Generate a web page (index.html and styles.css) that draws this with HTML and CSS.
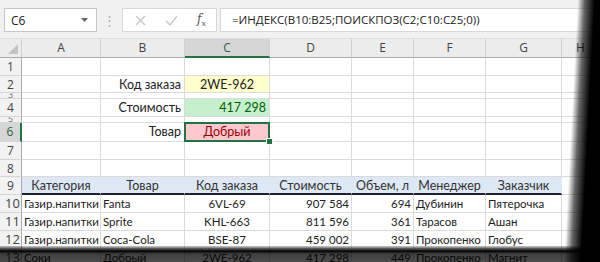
FILE: index.html
```html
<html>
	<head>
		<title>Excel - ИНДЕКС и ПОИСКПОЗ</title>
		<link rel="stylesheet" href="styles.css">
	</head>
	<body>
		<div class="window">
			<div class="bar">
				<div class="namebox">
					<span>C6</span>
					<svg width="7" height="4" viewBox="0 0 7 4"><path d="M0 0h7L3.5 4z" fill="#666"/></svg>
				</div>
				<div class="grip">⋮</div>
				<div class="fxbox">
					<svg width="11" height="11" viewBox="0 0 11 11"><path d="M1 1l9 9M10 1l-9 9" stroke="#c8c8c8" stroke-width="1.4"/></svg>
					<svg width="13" height="11" viewBox="0 0 13 11"><path d="M1 6l4 4l7-9" stroke="#c8c8c8" stroke-width="1.4" fill="none"/></svg>
					<span class="fx">f<sub>x</sub></span>
				</div>
				<div class="formula">=ИНДЕКС(B10:B25;ПОИСКПОЗ(C2;C10:C25;0))</div>
			</div>

			<div class="sheet">
				<div class="row head">
					<div class="corner"><i></i></div>
					<div>A</div><div>B</div><div class="on">C</div><div>D</div><div>E</div><div>F</div><div>G</div><div>H</div>
				</div>
				<div class="row">
					<div class="rh">1</div>
					<div class="c"></div><div class="c"></div><div class="c"></div><div class="c"></div><div class="c"></div><div class="c"></div><div class="c"></div><div class="c"></div>
				</div>
				<div class="row h17">
					<div class="rh">2</div>
					<div class="c"></div><div class="c lbl">Код заказа</div><div class="c ctr yellow">2WE-962</div><div class="c"></div><div class="c"></div><div class="c"></div><div class="c"></div><div class="c"></div>
				</div>
				<div class="row thin">
					<div class="rh"><span>3</span></div>
					<div class="c"></div><div class="c"></div><div class="c"></div><div class="c"></div><div class="c"></div><div class="c"></div><div class="c"></div><div class="c"></div>
				</div>
				<div class="row">
					<div class="rh">4</div>
					<div class="c"></div><div class="c lbl">Стоимость</div><div class="c num green">417 298</div><div class="c"></div><div class="c"></div><div class="c"></div><div class="c"></div><div class="c"></div>
				</div>
				<div class="row thin">
					<div class="rh"><span>5</span></div>
					<div class="c"></div><div class="c"></div><div class="c"></div><div class="c"></div><div class="c"></div><div class="c"></div><div class="c"></div><div class="c"></div>
				</div>
				<div class="row h19">
					<div class="rh on">6</div>
					<div class="c"></div><div class="c lbl">Товар</div><div class="c ctr red sel">Добрый</div><div class="c"></div><div class="c"></div><div class="c"></div><div class="c"></div><div class="c"></div>
				</div>
				<div class="row">
					<div class="rh">7</div>
					<div class="c"></div><div class="c"></div><div class="c"></div><div class="c"></div><div class="c"></div><div class="c"></div><div class="c"></div><div class="c"></div>
				</div>
				<div class="row h17">
					<div class="rh">8</div>
					<div class="c"></div><div class="c"></div><div class="c"></div><div class="c"></div><div class="c"></div><div class="c"></div><div class="c"></div><div class="c"></div>
				</div>
				<div class="row">
					<div class="rh">9</div>
					<div class="c th">Категория</div><div class="c th">Товар</div><div class="c th">Код заказа</div><div class="c th">Стоимость</div><div class="c th">Объем, л</div><div class="c th">Менеджер</div><div class="c th">Заказчик</div><div class="c"></div>
				</div>
				<div class="row data">
					<div class="rh">10</div>
					<div class="c">Газир.напитки</div><div class="c">Fanta</div><div class="c ctr">6VL-69</div><div class="c num">907 584</div><div class="c num">694</div><div class="c">Дубинин</div><div class="c">Пятерочка</div><div class="c"></div>
				</div>
				<div class="row data">
					<div class="rh">11</div>
					<div class="c">Газир.напитки</div><div class="c">Sprite</div><div class="c ctr">KHL-663</div><div class="c num">811 596</div><div class="c num">361</div><div class="c">Тарасов</div><div class="c">Ашан</div><div class="c"></div>
				</div>
				<div class="row data">
					<div class="rh">12</div>
					<div class="c">Газир.напитки</div><div class="c">Coca-Cola</div><div class="c ctr">BSE-87</div><div class="c num">459 002</div><div class="c num">391</div><div class="c">Прокопенко</div><div class="c">Глобус</div><div class="c"></div>
				</div>
				<div class="row data">
					<div class="rh">13</div>
					<div class="c">Соки</div><div class="c">Добрый</div><div class="c ctr">2WE-962</div><div class="c num">417 298</div><div class="c num">449</div><div class="c">Прокопенко</div><div class="c">Магнит</div><div class="c"></div>
				</div>
			</div>

			<div class="shade-right"></div>
			<div class="shade-bottom"></div>
		</div>
	</body>
</html>
```

FILE: styles.css
```css
body {
	margin: 0;
	background: #000;
}
.window {
	position: relative;
	width: 600px;
	height: 262px;
	overflow: hidden;
	background: #fff;
}

/* formula bar */
.bar {
	height: 39px;
	box-sizing: border-box;
	padding: 8px 0 0 4px;
	display: flex;
	align-items: flex-start;
	background: #f1f1f1;
	border-bottom: 1px solid #dedede;
	font-family: "Open Sans", sans-serif;
	font-size: 12px;
	color: #222;
}
.namebox {
	width: 93px;
	height: 24px;
	box-sizing: border-box;
	border: 1px solid #c6c6c6;
	background: #fff;
	display: flex;
	align-items: center;
	justify-content: space-between;
	padding: 0 8px 0 6px;
}
.grip {
	width: 25px;
	height: 24px;
	line-height: 24px;
	text-align: center;
	color: #b0b0b0;
	font-size: 13px;
}
.fxbox {
	width: 95px;
	height: 24px;
	box-sizing: border-box;
	border: 1px solid #d8d8d8;
	background: #fff;
	display: flex;
	align-items: center;
	gap: 19px;
	padding-left: 12px;
}
.fx {
	font-family: "DejaVu Serif", serif;
	font-style: italic;
	font-size: 12px;
	color: #555;
}
.fx sub {
	font-size: 8px;
}
.formula {
	flex: 1;
	height: 24px;
	line-height: 22px;
	box-sizing: border-box;
	margin-left: 3px;
	border: 1px solid #d8d8d8;
	background: #fff;
	padding-left: 11px;
	white-space: nowrap;
	font-size: 11.5px;
}

/* sheet grid */
.sheet {
	font-family: Lato, sans-serif;
	font-size: 12.5px;
	color: #222;
}
.row {
	display: grid;
	grid-template-columns: 22px 79px 84px 85px 82px 62px 72px 76px 38px;
	height: 18px;
}
.row.h17 { height: 17px; }
.row.h19 { height: 19px; }
.row.thin { height: 6px; }
.row > div {
	box-sizing: border-box;
	overflow: hidden;
	white-space: nowrap;
}
.row.head {
	height: 19px;
	font-family: "Open Sans", sans-serif;
	font-size: 12px;
	color: #444;
}
.head > div {
	background: #ececec;
	border-right: 1px solid #cfcfcf;
	border-bottom: 1px solid #ababab;
	text-align: center;
	line-height: 18px;
}
.head > div.on {
	background: #d6d6d6;
	border-bottom: 2px solid #217346;
	color: #2f5d44;
}
.head .corner {
	display: flex;
	align-items: flex-end;
	justify-content: flex-end;
	padding: 0 3px 3px 0;
}
.corner i {
	width: 0;
	height: 0;
	border-left: 10px solid transparent;
	border-bottom: 10px solid #c4c4c4;
}
.rh {
	background: #f2f2f2;
	border-right: 1px solid #ababab;
	border-bottom: 1px solid #d4d4d4;
	font-family: "Open Sans", sans-serif;
	font-size: 12px;
	color: #444;
	text-align: center;
	line-height: 17px;
}
.rh.on {
	background: #d6d6d6;
	border-right: 2px solid #217346;
	color: #2f5d44;
}
.thin .rh {
	display: flex;
	justify-content: center;
	align-items: flex-start;
	line-height: 5px;
}
.thin .rh span {
	display: block;
	height: 5px;
	overflow: hidden;
	font-size: 9px;
	line-height: 4px;
	color: #777;
}
.c {
	border-right: 1px solid #dadada;
	border-bottom: 1px solid #dadada;
	padding: 0 3px;
	line-height: 17px;
}
.lbl,
.num {
	text-align: right;
}
.ctr {
	text-align: center;
}
.yellow {
	background: #ffffcc;
}
.green {
	background: #c6efce;
	color: #006100;
}
.red {
	background: #ffc7ce;
	color: #9c0006;
}
.row > .sel {
	position: relative;
	overflow: visible;
}
.sel::after {
	content: "";
	position: absolute;
	left: -1px;
	top: -1px;
	right: -1px;
	bottom: -1px;
	border: 2px solid #217346;
}
.sel::before {
	content: "";
	position: absolute;
	right: -4px;
	bottom: -4px;
	width: 5px;
	height: 5px;
	background: #217346;
	border: 1px solid #fff;
	z-index: 1;
}
.th {
	background: #dde8f4;
	border-right-color: #dde8f4 !important;
	border-bottom: 2px solid #1c2330 !important;
	text-align: center;
	color: #333;
}
.data .c {
	font-size: 11.5px;
	padding: 0 2px;
}
.data .rh {
	font-size: 13px;
	text-align: left;
	padding-left: 5px;
}

/* screenshot edge shadow */
.shade-right {
	position: absolute;
	inset: 0;
	background: linear-gradient(93deg, rgba(0, 0, 0, 0) 577px, rgba(0, 0, 0, 0.6) 584px, #000 594px);
}
.shade-bottom {
	position: absolute;
	left: 0;
	right: 0;
	top: 246px;
	bottom: 0;
	background: linear-gradient(rgba(0, 0, 0, 0.2), #000 5px, rgba(0, 0, 0, 0.75) 8px, rgba(0, 0, 0, 0.7));
}
```
